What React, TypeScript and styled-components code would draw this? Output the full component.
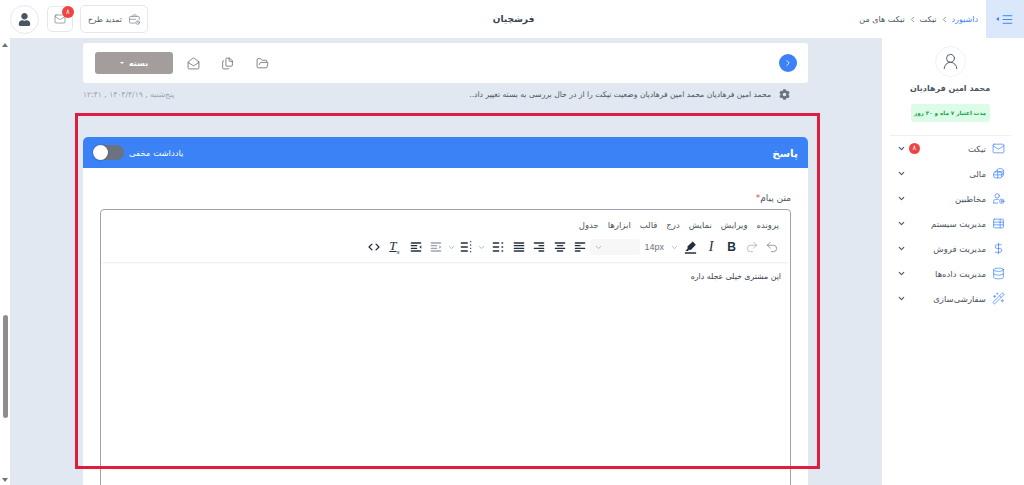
import { FC, ReactNode } from 'react';
import styled, { createGlobalStyle } from 'styled-components';
import {
  ChevronDown,
  ChevronRight,
  ChevronLeft,
  Menu,
  Mail,
  MailOpen,
  Files,
  FolderOpen,
  UserRound,
  DollarSign,
  Database,
  WandSparkles,
  Undo2,
  Redo2,
} from 'lucide-react';
import { FaUser, FaCog } from 'react-icons/fa';

const GlobalStyle = createGlobalStyle`
  html, body { margin: 0; padding: 0; height: 100%; overflow: hidden; }
  *, *::before, *::after { box-sizing: border-box; }
  body { font-family: "DejaVu Sans", "Noto Sans", sans-serif; background: #fff; color: #374151; }
`;

type IconProps = { size?: number; strokeWidth?: number; color?: string };

const Line: FC<IconProps & { children: ReactNode }> = ({ size = 13, strokeWidth = 1.3, color = 'currentColor', children }) => (
  <svg width={size} height={size} viewBox="0 0 24 24" fill="none" stroke={color} strokeWidth={strokeWidth} strokeLinecap="round" strokeLinejoin="round">
    {children}
  </svg>
);

const CashStackIcon: FC<IconProps> = (p) => (
  <Line {...p}>
    <path d="M9 8V6c0-1.7 2.7-3 6-3s6 1.3 6 3v9c0 1.2-1.2 2.2-3 2.7" />
    <path d="M9 6c0 1.7 2.7 3 6 3s6-1.3 6-3M15 9v0M21 10.5c0 1.2-1.2 2.2-3 2.7" />
    <rect x="3" y="9" width="15" height="11" rx="3" />
    <path d="M3 14.5h15M10.500 9v11" />
  </Line>
);

const UserGearIcon: FC<IconProps> = (p) => (
  <Line {...p}>
    <circle cx="9.500" cy="7" r="4" />
    <path d="M3 20v-2.500a4 4 0 0 1 4-4h5" />
    <path d="M3 20.500h8" />
    <circle cx="18" cy="17" r="4" />
    <circle cx="18" cy="17" r="1.300" />
  </Line>
);

const RowsTableIcon: FC<IconProps> = (p) => (
  <Line {...p}>
    <rect x="3" y="4" width="18" height="16" rx="1.500" />
    <path d="M3 9.500h18M3 14.500h18M15 4v16" />
  </Line>
);

const BriefcaseClockIcon: FC<IconProps> = (p) => (
  <Line {...p}>
    <path d="M9 6V4.500A1.500 1.500 0 0 1 10.500 3h4A1.500 1.500 0 0 1 16 4.500V6" />
    <path d="M14 19H4.500A1.500 1.500 0 0 1 3 17.500v-10A1.500 1.500 0 0 1 4.500 6h16A1.500 1.500 0 0 1 22 7.500V12" />
    <path d="M3 11.500h12" />
    <circle cx="19" cy="18" r="3.500" />
    <path d="M19 16.500V18l1 .7" />
  </Line>
);

const PenMarkIcon: FC = () => (
  <svg width="15" height="15" viewBox="0 0 24 24" fill="#222f3e">
    <path d="M3 19.500h18V22H3z" />
    <path d="M15.500 2.500l5 5-8 8.500-3-.5-1.500 2H4l3.500-4.500-.500-2.500z" />
  </svg>
);

const CodeIcon: FC = () => (
  <svg width="14" height="14" viewBox="0 0 24 24" fill="none" stroke="#222f3e" strokeWidth="2.200" strokeLinecap="round" strokeLinejoin="round">
    <path d="M8.500 7l-5 5 5 5M15.500 7l5 5-5 5" />
  </svg>
);

const NAV = [
  { label: 'تیکت', icon: Mail, badge: '۸' },
  { label: 'مالی', icon: CashStackIcon },
  { label: 'مخاطبین', icon: UserGearIcon },
  { label: 'مدیریت سیستم', icon: RowsTableIcon },
  { label: 'مدیریت فروش', icon: DollarSign },
  { label: 'مدیریت داده‌ها', icon: Database },
  { label: 'سفارشی‌سازی', icon: WandSparkles },
];

const MENUS = ['پرونده', 'ویرایش', 'نمایش', 'درج', 'قالب', 'ابزارها', 'جدول'];

// bars of the tinymce alignment and list icons: [x, y, width]
type Bar = [number, number, number];
const BarsIcon: FC<{ bars: Bar[]; muted?: boolean; children?: ReactNode }> = ({ bars, muted, children }) => (
  <svg width="16" height="16" viewBox="0 0 24 24" fill={muted ? '#9ca3af' : '#222f3e'}>
    {bars.map(([x, y, w]) => (
      <rect key={`${x}-${y}`} x={x} y={y} width={w} height="2" rx="1" />
    ))}
    {children}
  </svg>
);

const ALIGN_LEFT: Bar[] = [[4, 5, 16], [4, 9, 9], [4, 13, 16], [4, 17, 9]];
const ALIGN_CENTER: Bar[] = [[4, 5, 16], [7, 9, 10], [4, 13, 16], [7, 17, 10]];
const ALIGN_RIGHT: Bar[] = [[4, 5, 16], [11, 9, 9], [4, 13, 16], [11, 17, 9]];
const JUSTIFY: Bar[] = [[4, 5, 16], [4, 9, 16], [4, 13, 16], [4, 17, 16]];
const BULLETS: Bar[] = [[4, 5, 10], [4, 11, 10], [4, 17, 10], [17, 5, 3], [17, 11, 3], [17, 17, 3]];
const NUMBERS: Bar[] = [[4, 5, 11], [4, 11, 11], [4, 17, 11], [18, 3, 2], [18, 8, 2], [18, 13, 2], [18, 18, 2]];
const INDENT: Bar[] = [[4, 5, 16], [4, 9, 10], [4, 13, 10], [4, 17, 16]];

const App: FC = () => (
  <Page dir="rtl">
    <GlobalStyle />
    <TopBar>
      <TopRight>
        <MenuToggle>
          <Menu size={13} strokeWidth={1.8} />
          <ToggleArrow />
        </MenuToggle>
        <Breadcrumbs>
          <Crumb $active>داشبورد</Crumb>
          <ChevronLeft size={9} color="#6b7280" />
          <Crumb>تیکت</Crumb>
          <ChevronLeft size={9} color="#6b7280" />
          <Crumb>تیکت های من</Crumb>
        </Breadcrumbs>
      </TopRight>
      <BrandTitle>فرشچیان</BrandTitle>
      <TopLeft>
        <PlanButton>
          <BriefcaseClockIcon size={13} strokeWidth={1.2} color="#6b7280" />
          تمدید طرح
        </PlanButton>
        <MailButton>
          <Mail size={12} strokeWidth={1.3} color="#6b7280" />
          <MailBadge>۸</MailBadge>
        </MailButton>
        <ProfileButton>
          <FaUser size={13} color="#4b5563" />
        </ProfileButton>
      </TopLeft>
    </TopBar>

    <Body>
      <Sidebar>
        <AvatarCircle>
          <UserRound size={19} strokeWidth={1.2} color="#4b5563" />
        </AvatarCircle>
        <UserName>محمد امین فرهادیان</UserName>
        <Validity>مدت اعتبار ۷ ماه و ۳۰ روز</Validity>
        <SideDivider />
        <NavList>
          {NAV.map(({ label, icon: Icon, badge }) => (
            <NavItem key={label}>
              <Icon size={13} strokeWidth={1.3} color="#3b82f6" />
              <NavLabel>{label}</NavLabel>
              {badge && <NavBadge>{badge}</NavBadge>}
              <ChevronDown size={9} strokeWidth={3} color="#4b5563" />
            </NavItem>
          ))}
        </NavList>
      </Sidebar>

      <Main>
        <ActionCard>
          <RoundNext>
            <ChevronRight size={10} color="#fff" />
          </RoundNext>
          <ActionTools>
            <FolderOpen size={13} strokeWidth={1.3} color="#4b5563" />
            <Files size={13} strokeWidth={1.3} color="#4b5563" />
            <MailOpen size={13} strokeWidth={1.3} color="#4b5563" />
            <StatusButton>
              بسته
              <Caret />
            </StatusButton>
          </ActionTools>
        </ActionCard>

        <LogRow>
          <FaCog size={11} color="#6b7280" />
          <LogText>محمد امین فرهادیان محمد امین فرهادیان وضعیت تیکت را از در حال بررسی به بسته تغییر داد..</LogText>
          <LogDate>پنج‌شنبه , ۱۴۰۴/۴/۱۹ , ۱۲:۴۱</LogDate>
        </LogRow>

        <ReplyCard>
          <ReplyHeader>
            <ReplyTitle>پاسخ</ReplyTitle>
            <NoteToggle>
              یادداشت مخفی
              <SwitchTrack>
                <SwitchThumb />
              </SwitchTrack>
            </NoteToggle>
          </ReplyHeader>
          <ReplyBody>
            <FieldLabel>
              متن پیام<Required>*</Required>
            </FieldLabel>
            <Editor>
              <EditorHead>
                <MenuRow>
                  {MENUS.map((m) => (
                    <MenuEntry key={m}>{m}</MenuEntry>
                  ))}
                </MenuRow>
                <ToolRow>
                  <Tool $w={20}><Undo2 size={14} strokeWidth={1.2} color="#6b7280" /></Tool>
                  <Tool $w={20}><Redo2 size={14} strokeWidth={1.2} color="#9ca3af" /></Tool>
                  <Tool $w={21}><BoldMark>B</BoldMark></Tool>
                  <Tool $w={20}><ItalicMark>I</ItalicMark></Tool>
                  <Tool $w={22}><PenMarkIcon /></Tool>
                  <SizeSelect>
                    <ChevronDown size={9} color="#9ca3af" />
                    <span>14px</span>
                  </SizeSelect>
                  <FontSelect>
                    <ChevronDown size={9} color="#9ca3af" />
                  </FontSelect>
                  <Tool $w={20}><BarsIcon bars={ALIGN_LEFT} /></Tool>
                  <Tool $w={21}><BarsIcon bars={ALIGN_CENTER} /></Tool>
                  <Tool $w={20}><BarsIcon bars={ALIGN_RIGHT} /></Tool>
                  <Tool $w={21}><BarsIcon bars={JUSTIFY} /></Tool>
                  <Tool $w={21}><BarsIcon bars={BULLETS} /></Tool>
                  <Tool $w={12}><ChevronDown size={9} color="#9ca3af" /></Tool>
                  <Tool $w={18}><BarsIcon bars={NUMBERS} /></Tool>
                  <Tool $w={11}><ChevronDown size={9} color="#9ca3af" /></Tool>
                  <Tool $w={20}><BarsIcon bars={INDENT} muted><path d="M17 9.500l3 2.500-3 2.500z" /></BarsIcon></Tool>
                  <Tool $w={21}><BarsIcon bars={INDENT}><path d="M20 9.500l-3 2.500 3 2.500z" /></BarsIcon></Tool>
                  <Tool $w={21}><ClearFormat>T<sub>x</sub></ClearFormat></Tool>
                  <Tool $w={21}><CodeIcon /></Tool>
                </ToolRow>
              </EditorHead>
              <EditorText>این مشتری خیلی عجله داره</EditorText>
            </Editor>
          </ReplyBody>
        </ReplyCard>
        <Highlight />
      </Main>

      <Scrollbar>
        <ScrollArrow $up />
        <ScrollThumb />
        <ScrollArrow />
      </Scrollbar>
    </Body>
  </Page>
);

export default App;

const Page = styled.div`
  display: flex;
  flex-direction: column;
  height: 485px;
  width: 1024px;
  overflow: hidden;
`;

const TopBar = styled.header`
  display: grid;
  grid-template-columns: 1fr auto 1fr;
  align-items: center;
  height: 38px;
  flex-shrink: 0;
  background: #fff;
`;

const TopRight = styled.div`
  display: flex;
  align-items: center;
  height: 100%;
`;

const MenuToggle = styled.div`
  display: flex;
  align-items: center;
  justify-content: center;
  gap: 2px;
  width: 38px;
  height: 100%;
  background: #dbe7fb;
  color: #3b82f6;
`;

const ToggleArrow = styled.i`
  border-style: solid;
  border-width: 2px 3px 2px 0;
  border-color: transparent #3b82f6 transparent transparent;
`;

const Breadcrumbs = styled.nav`
  display: flex;
  align-items: center;
  gap: 3px;
  margin-right: 8px;
`;

const Crumb = styled.span<{ $active?: boolean }>`
  font-size: 8px;
  color: ${(p) => (p.$active ? '#3b82f6' : '#4b5563')};
`;

const BrandTitle = styled.div`
  padding-left: 3px;
  font-size: 9px;
  font-weight: 700;
  color: #374151;
`;

const TopLeft = styled.div`
  display: flex;
  align-items: center;
  gap: 7px;
  padding-left: 10px;
  justify-self: end;
`;

const PlanButton = styled.button`
  display: flex;
  align-items: center;
  gap: 6px;
  width: 68px;
  height: 28px;
  padding: 0 7px;
  border: 1px solid #e5e7eb;
  border-radius: 5px;
  background: #fff;
  color: #4b5563;
  font: 7.5px "DejaVu Sans", sans-serif;
  white-space: nowrap;
`;

const MailButton = styled.div`
  position: relative;
  display: flex;
  align-items: center;
  justify-content: center;
  width: 26px;
  height: 26px;
  margin-left: 1px;
  border: 1px solid #e5e7eb;
  border-radius: 5px;
`;

const MailBadge = styled.span`
  position: absolute;
  top: -1px;
  left: 14px;
  width: 12px;
  height: 12px;
  border-radius: 50%;
  background: #ef4444;
  color: #fff;
  font-size: 7px;
  line-height: 12px;
  text-align: center;
`;

const ProfileButton = styled.div`
  display: flex;
  align-items: center;
  justify-content: center;
  width: 29px;
  height: 29px;
  border: 1px solid #e5e7eb;
  border-radius: 50%;
`;

const Body = styled.div`
  display: flex;
  flex: 1;
  min-height: 0;
  background: #e2e8f2;
`;

const Sidebar = styled.aside`
  display: flex;
  flex-direction: column;
  align-items: center;
  width: 142px;
  flex-shrink: 0;
  padding: 8px 6px 0 0;
  background: #fff;
`;

const AvatarCircle = styled.div`
  display: flex;
  align-items: center;
  justify-content: center;
  width: 31px;
  height: 31px;
  border: 1px solid #f0f1f3;
  border-radius: 50%;
`;

const UserName = styled.div`
  margin-top: 7px;
  font-size: 8px;
  font-weight: 700;
  color: #4b5563;
`;

const Validity = styled.div`
  display: flex;
  align-items: center;
  justify-content: center;
  width: 79px;
  height: 18px;
  margin-top: 11px;
  border-radius: 3px;
  background: #dcfce7;
  color: #16a34a;
  font-size: 5.6px;
  font-weight: 700;
  white-space: nowrap;
`;

const SideDivider = styled.hr`
  width: 121px;
  margin: 13px 0 0;
  border: 0;
  border-top: 1px solid #eef0f3;
`;

const NavList = styled.ul`
  align-self: stretch;
  margin: 0;
  padding: 0 13px 0 15px;
  list-style: none;
`;

const NavItem = styled.li`
  display: flex;
  align-items: center;
  gap: 6px;
  height: 25px;
`;

const NavLabel = styled.span`
  flex: 1;
  font-size: 8.5px;
  color: #4b5563;
`;

const NavBadge = styled.span`
  width: 11px;
  height: 11px;
  margin-left: -3px;
  border-radius: 50%;
  background: #ef4444;
  color: #fff;
  font-size: 7px;
  line-height: 11px;
  text-align: center;
`;

const Main = styled.main`
  position: relative;
  flex: 1;
  min-width: 0;
  padding: 5px 74px 0 73px;
  overflow: hidden;
`;

const ActionCard = styled.section`
  display: flex;
  align-items: center;
  justify-content: space-between;
  height: 40px;
  padding: 0 11px 0 12px;
  border-radius: 3px;
  background: #fff;
`;

const RoundNext = styled.span`
  display: flex;
  align-items: center;
  justify-content: center;
  width: 18px;
  height: 18px;
  border-radius: 50%;
  background: #3b82f6;
`;

const ActionTools = styled.div`
  display: flex;
  align-items: center;
  gap: 21.500px;
`;

const StatusButton = styled.span`
  display: flex;
  align-items: center;
  justify-content: center;
  gap: 5px;
  width: 78px;
  height: 22px;
  margin-right: -8px;
  border-radius: 3px;
  background: #a39e9b;
  color: #fff;
  font-size: 8px;
  font-weight: 700;
`;

const Caret = styled.i`
  border-style: solid;
  border-width: 2px 2px 0;
  border-color: #fff transparent transparent;
`;

const LogRow = styled.div`
  display: flex;
  align-items: center;
  gap: 8px;
  height: 22px;
  padding-right: 18px;
  color: #6b7280;
`;

const LogText = styled.span`
  flex: 1;
  font-size: 7.650px;
  color: #4b5563;
  white-space: nowrap;
`;

const LogDate = styled.span`
  font-size: 7.600px;
  color: #9ca3af;
  white-space: nowrap;
`;

const ReplyCard = styled.section`
  margin-top: 32px;
  border-radius: 5px 5px 0 0;
  background: #fff;
`;

const ReplyHeader = styled.div`
  display: flex;
  align-items: center;
  justify-content: space-between;
  height: 31px;
  padding: 0 10px;
  border-radius: 5px 5px 0 0;
  background: #3b82f6;
`;

const ReplyTitle = styled.h3`
  margin: 0;
  font-size: 10.500px;
  font-weight: 700;
  color: #fff;
`;

const NoteToggle = styled.label`
  display: flex;
  align-items: center;
  gap: 5px;
  font-size: 8.500px;
  color: #fff;
`;

const SwitchTrack = styled.span`
  position: relative;
  display: block;
  width: 31px;
  height: 15px;
  border-radius: 8px;
  background: #6b7280;
`;

const SwitchThumb = styled.span`
  position: absolute;
  top: 0;
  left: 0;
  width: 15px;
  height: 15px;
  border-radius: 50%;
  background: #fff;
  box-shadow: 0 0 2px rgba(0, 0, 0, 0.4);
`;

const ReplyBody = styled.div`
  padding: 25px 17px 0;
`;

const FieldLabel = styled.label`
  display: block;
  height: 16px;
  font-size: 9px;
  color: #4b5563;
`;

const Required = styled.span`
  color: #ef4444;
`;

const Editor = styled.div`
  height: 300px;
  border: 1px solid #9ca3af;
  border-radius: 4px;
  overflow: hidden;
`;

const EditorHead = styled.div`
  height: 52px;
  padding: 6px 11px 0 0;
  box-shadow: 0 2px 2px -1px rgba(0, 0, 0, 0.08);
`;

const MenuRow = styled.div`
  display: flex;
  align-items: center;
  gap: 9px;
  height: 17px;
`;

const MenuEntry = styled.span`
  font-size: 8.500px;
  color: #4b5563;
`;

const ToolRow = styled.div`
  display: flex;
  align-items: center;
  height: 22px;
  margin: 3px -3px 0 0;
`;

const Tool = styled.span<{ $w: number }>`
  display: flex;
  align-items: center;
  justify-content: center;
  width: ${(p) => p.$w}px;
  flex-shrink: 0;
`;

const BoldMark = styled.b`
  font: 700 12px "Liberation Sans", sans-serif;
  color: #222f3e;
`;

const ItalicMark = styled.i`
  font: italic 14px "Liberation Serif", serif;
  color: #222f3e;
`;

const ClearFormat = styled.span`
  font: italic 13px "Liberation Serif", serif;
  color: #222f3e;
  text-decoration: underline;
  direction: ltr;

  sub {
    font-size: 7px;
  }
`;

const SizeSelect = styled.span`
  display: flex;
  align-items: center;
  gap: 6px;
  width: 39px;
  font: 9px "Liberation Sans", sans-serif;
  color: #6b7280;
`;

const FontSelect = styled.span`
  display: flex;
  align-items: center;
  justify-content: flex-end;
  width: 50px;
  height: 16px;
  padding-left: 4px;
  border-radius: 3px;
  background: #f7f7f7;
`;

const EditorText = styled.p`
  margin: 10px 9px 0 0;
  font-size: 7.800px;
  color: #374151;
`;

const Highlight = styled.div`
  position: absolute;
  top: 75px;
  left: 65px;
  width: 745px;
  height: 356px;
  border: 3px solid #e11d3f;
  pointer-events: none;
`;

const Scrollbar = styled.div`
  display: flex;
  flex-direction: column;
  align-items: center;
  width: 10px;
  flex-shrink: 0;
  background: #fff;
`;

const ScrollArrow = styled.i<{ $up?: boolean }>`
  margin: ${(p) => (p.$up ? '5px 0 0' : '0 0 3px')};
  border-style: solid;
  border-width: ${(p) => (p.$up ? '0 3px 4px' : '4px 3px 0')};
  border-color: ${(p) => (p.$up ? 'transparent transparent #6b7280' : '#6b7280 transparent transparent')};
`;

const ScrollThumb = styled.div`
  width: 5px;
  height: 103px;
  margin: auto 0 60px;
  border-radius: 3px;
  background: #8e8e8e;
`;
